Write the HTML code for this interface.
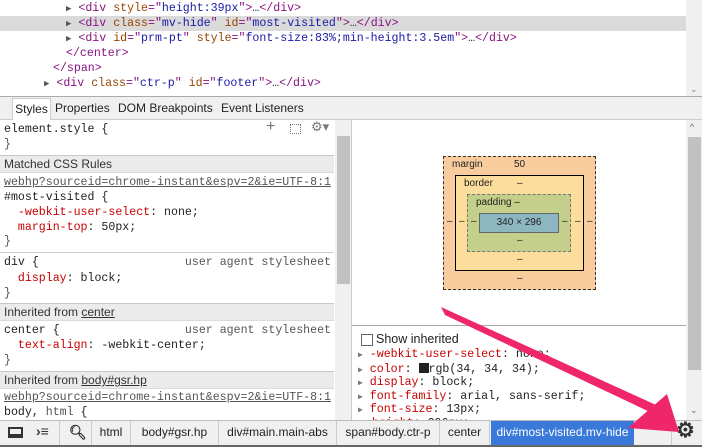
<!DOCTYPE html>
<html><head><style>
*{margin:0;padding:0;box-sizing:border-box}
body{width:702px;height:447px;overflow:hidden;background:#fff;position:relative;font-family:"Liberation Sans",sans-serif;color:#222}
.m{font-family:"Liberation Mono",monospace;font-size:11.6px;white-space:pre;position:absolute;line-height:15px}
.t{color:#881280}.a{color:#994500}.v{color:#1a1aa6}.p{color:#c80000}.g{color:#555}
.abs{position:absolute}
.hdr{position:absolute;left:0;width:334px;height:18px;background:#ebebeb;border-top:1px solid #c8c8c8;border-bottom:1px solid #dadada;font-size:12px;line-height:16px;padding-left:4px;color:#333}
.u{text-decoration:underline}
.sb{position:absolute;background:#f0f0f0}
.th{position:absolute;background:#c1c1c1}
.bt{position:absolute;top:421px;height:24px;font-size:12px;line-height:23px;border-right:1px solid #ccc;text-align:center;color:#222}
</style></head><body>
<div class="abs" style="left:0;top:16px;width:686px;height:15px;background:#dadada"></div>
<div class="m" style="left:66px;top:1px"><span style="font-size:9px;color:#555">▶</span> <span class="t">&lt;div</span> <span class="a">style</span><span class="t">="</span><span class="v">height:39px</span><span class="t">"&gt;</span>…<span class="t">&lt;/div&gt;</span></div>
<div class="m" style="left:66px;top:16px"><span style="font-size:9px;color:#555">▶</span> <span class="t">&lt;div</span> <span class="a">class</span><span class="t">="</span><span class="v">mv-hide</span><span class="t">"</span> <span class="a">id</span><span class="t">="</span><span class="v">most-visited</span><span class="t">"&gt;</span>…<span class="t">&lt;/div&gt;</span></div>
<div class="m" style="left:66px;top:31px"><span style="font-size:9px;color:#555">▶</span> <span class="t">&lt;div</span> <span class="a">id</span><span class="t">="</span><span class="v">prm-pt</span><span class="t">"</span> <span class="a">style</span><span class="t">="</span><span class="v">font-size:83%;min-height:3.5em</span><span class="t">"&gt;</span>…<span class="t">&lt;/div&gt;</span></div>
<div class="m t" style="left:66px;top:46px">&lt;/center&gt;</div>
<div class="m t" style="left:53px;top:61px">&lt;/span&gt;</div>
<div class="m" style="left:44px;top:76px"><span style="font-size:9px;color:#555">▶</span> <span class="t">&lt;div</span> <span class="a">class</span><span class="t">="</span><span class="v">ctr-p</span><span class="t">"</span> <span class="a">id</span><span class="t">="</span><span class="v">footer</span><span class="t">"&gt;</span>…<span class="t">&lt;/div&gt;</span></div>
<div class="sb" style="left:686px;top:0;width:16px;height:96px"></div>
<div class="abs" style="left:690px;top:84px;font-size:9px;color:#888">⌄</div>
<div class="abs" style="left:0;top:96px;width:702px;height:24px;background:#f0f0f0;border-top:1px solid #aaa;border-bottom:1px solid #ccc"></div>
<div class="abs" style="left:12px;top:98px;width:39px;height:22px;background:#fff;border:1px solid #ccc;border-bottom:none;font-size:12px;line-height:20px;text-align:center">Styles</div>
<div class="abs" style="left:55px;top:101px;font-size:12px">Properties</div>
<div class="abs" style="left:118px;top:101px;font-size:12px">DOM Breakpoints</div>
<div class="abs" style="left:221px;top:101px;font-size:12px">Event Listeners</div>
<div class="m" style="left:4px;top:122px">element.style {</div>
<div class="abs" style="left:266px;top:118px;font-size:16px;color:#777">+</div>
<div class="abs" style="left:290px;top:124px;width:11px;height:10px;border:1px dotted #777"></div>
<div class="abs" style="left:311px;top:119px;font-size:13px;color:#777">⚙▾</div>
<div class="m g" style="left:4px;top:137px">}</div>
<div class="hdr" style="top:155px">Matched CSS Rules</div>
<div class="m u g" style="left:4px;top:175px">webhp?sourceid=chrome-instant&amp;espv=2&amp;ie=UTF-8:1</div>
<div class="m" style="left:4px;top:190px">#most-visited {</div>
<div class="m" style="left:4px;top:205px">  <span class="p">-webkit-user-select</span>: none;</div>
<div class="m" style="left:4px;top:220px">  <span class="p">margin-top</span>: 50px;</div>
<div class="m g" style="left:4px;top:234px">}</div>
<div class="abs" style="left:0;top:252px;width:334px;border-top:1px solid #ccc"></div>
<div class="m" style="left:4px;top:255px">div {                     <span class="g">user agent stylesheet</span></div>
<div class="m" style="left:4px;top:271px">  <span class="p">display</span>: block;</div>
<div class="m g" style="left:4px;top:286px">}</div>
<div class="hdr" style="top:303px">Inherited from <span class="u">center</span></div>
<div class="m" style="left:4px;top:323px">center {                  <span class="g">user agent stylesheet</span></div>
<div class="m" style="left:4px;top:338px">  <span class="p">text-align</span>: -webkit-center;</div>
<div class="m g" style="left:4px;top:353px">}</div>
<div class="hdr" style="top:371px">Inherited from <span class="u">body#gsr.hp</span></div>
<div class="m u g" style="left:4px;top:390px">webhp?sourceid=chrome-instant&amp;espv=2&amp;ie=UTF-8:1</div>
<div class="m" style="left:4px;top:405px">body, <span class="g">html</span> {</div>
<div class="sb" style="left:335px;top:120px;width:16px;height:300px"></div>
<div class="th" style="left:337px;top:136px;width:13px;height:148px"></div>
<div class="abs" style="left:351px;top:120px;width:1px;height:300px;background:#ccc"></div>
<div class="abs" style="left:443px;top:156px;width:153px;height:134px;background:#f9cc9d;border:1px dashed #333"></div>
<div class="abs" style="left:452px;top:159px;font-size:10px">margin</div>
<div class="abs" style="left:514px;top:159px;font-size:10px">50</div>
<div class="abs" style="left:455px;top:175px;width:129px;height:96px;background:#fddd9b;border:1px solid #000"></div>
<div class="abs" style="left:464px;top:178px;font-size:10px">border</div>
<div class="abs" style="left:467px;top:194px;width:104px;height:58px;background:#c3cf8a;border:1px dashed #777"></div>
<div class="abs" style="left:476px;top:197px;font-size:10px">padding –</div>
<div class="abs" style="left:479px;top:213px;width:80px;height:20px;background:#8cb6c0;border:1px solid #666;font-size:10px;line-height:17px;text-align:center">340 × 296</div>
<div class="abs" style="left:517px;top:178px;font-size:10px">–</div>
<div class="abs" style="left:517px;top:235px;font-size:10px">–</div>
<div class="abs" style="left:517px;top:254px;font-size:10px">–</div>
<div class="abs" style="left:517px;top:273px;font-size:10px">–</div>
<div class="abs" style="left:447px;top:216px;font-size:10px">–</div>
<div class="abs" style="left:459px;top:216px;font-size:10px">–</div>
<div class="abs" style="left:471px;top:216px;font-size:10px">–</div>
<div class="abs" style="left:562px;top:216px;font-size:10px">–</div>
<div class="abs" style="left:575px;top:216px;font-size:10px">–</div>
<div class="abs" style="left:587px;top:216px;font-size:10px">–</div>
<div class="abs" style="left:352px;top:325px;width:334px;border-top:1px solid #aaa"></div>
<div class="abs" style="left:361px;top:334px;width:12px;height:12px;border:1px solid #666;background:#fff"></div>
<div class="abs" style="left:376px;top:332px;font-size:12.5px">Show inherited</div>
<div class="m" style="left:358px;top:349px;line-height:12.5px"><span style="font-size:8px;color:#777">▶</span> <span class="p">-webkit-user-select</span>: none;
<span style="font-size:8px;color:#777">▶</span> <span class="p">color</span>: <span style="display:inline-block;width:10px;height:10px;background:#222;vertical-align:-1px"></span>rgb(34, 34, 34);
<span style="font-size:8px;color:#777">▶</span> <span class="p">display</span>: block;
<span style="font-size:8px;color:#777">▶</span> <span class="p">font-family</span>: arial, sans-serif;
<span style="font-size:8px;color:#777">▶</span> <span class="p">font-size</span>: 13px;
  <span class="p">height</span>: 296px;</div>
<div class="sb" style="left:686px;top:120px;width:16px;height:300px"></div>
<div class="th" style="left:688px;top:137px;width:13px;height:233px"></div>
<div class="abs" style="left:690px;top:122px;font-size:9px;color:#666">^</div>
<div class="abs" style="left:690px;top:405px;font-size:9px;color:#666">⌄</div>
<div class="abs" style="left:0;top:420px;width:702px;height:27px;background:#f0f0f0;border-top:1px solid #bbb;border-bottom:2px solid #666"></div>
<div class="abs" style="left:8px;top:427px;width:15px;height:11px;border:2px solid #333;border-bottom-width:4px"></div>
<div class="abs" style="left:36px;top:423px;font-size:14px;font-weight:bold;color:#333">›≡</div>
<div class="abs" style="left:59px;top:421px;width:1px;height:24px;background:#ccc"></div>
<div class="abs" style="left:69px;top:424px;font-size:14px;font-weight:bold;color:#333">&#x1F50D;&#xFE0E;</div>
<div class="bt" style="left:91px;width:40px;border-left:1px solid #ccc">html</div>
<div class="bt" style="left:131px;width:88px">body#gsr.hp</div>
<div class="bt" style="left:219px;width:118px">div#main.main-abs</div>
<div class="bt" style="left:337px;width:103px">span#body.ctr-p</div>
<div class="bt" style="left:440px;width:50px">center</div>
<div class="bt" style="left:491px;width:143px;background:#3879d9;color:#fff;border:none">div#most-visited.mv-hide</div>
<div class="abs" style="left:671px;top:421px;width:1px;height:24px;background:#ccc"></div>
<div class="abs" style="left:676px;top:418px;font-size:21px;font-weight:bold;color:#333">⚙</div>
<svg class="abs" style="left:0;top:0" width="702" height="447"><polygon points="441,307 445,315 652,413 656,405" fill="#f0266b"/><polygon points="628,428 667,394 679,432" fill="#f0266b"/></svg>
</body></html>
